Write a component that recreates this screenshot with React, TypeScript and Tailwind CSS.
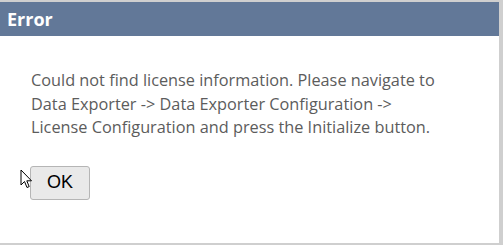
import React from "react";

const Cursor = () => (
  <svg width="13" height="21" viewBox="0 0 13 21" className="absolute left-[20px] top-[169px]">
    <path
      d="M1 1 L1 16 L4.5 12.5 L7 18.5 L9.2 17.6 L6.8 11.8 L11.5 11.8 Z"
      fill="#fff"
      stroke="#000"
      strokeWidth="1"
      strokeLinejoin="round"
    />
  </svg>
);

const App = () => {
  return (
    <div className="relative h-[245px] w-[503px] overflow-hidden bg-[#cfcfcf] pt-[2px]">
      <div className="flex h-[241px] w-[499px] flex-col bg-white">
        <div className="flex h-[34px] items-center bg-[#627898] px-[7px]">
          <span className="font-['Open_Sans',sans-serif] text-[18px] font-bold text-white">
            Error
          </span>
        </div>
        <div className="px-[31px] pt-[33px] font-['Open_Sans',sans-serif] text-[16.3px] leading-[23.5px] text-[#5c5c5c]">
          Could not find license information. Please navigate to
          <br />
          Data Exporter -&gt; Data Exporter Configuration -&gt;
          <br />
          License Configuration and press the Initialize button.
        </div>
        <div className="px-[30px] pt-[26px]">
          <button className="h-[34px] w-[60px] rounded-[3px] border border-[#b5b5b5] bg-[#e9e9e9] font-['Liberation_Sans',Arial,sans-serif] text-[18px] text-black">
            OK
          </button>
        </div>
      </div>
      <Cursor />
    </div>
  );
};

export default App;
